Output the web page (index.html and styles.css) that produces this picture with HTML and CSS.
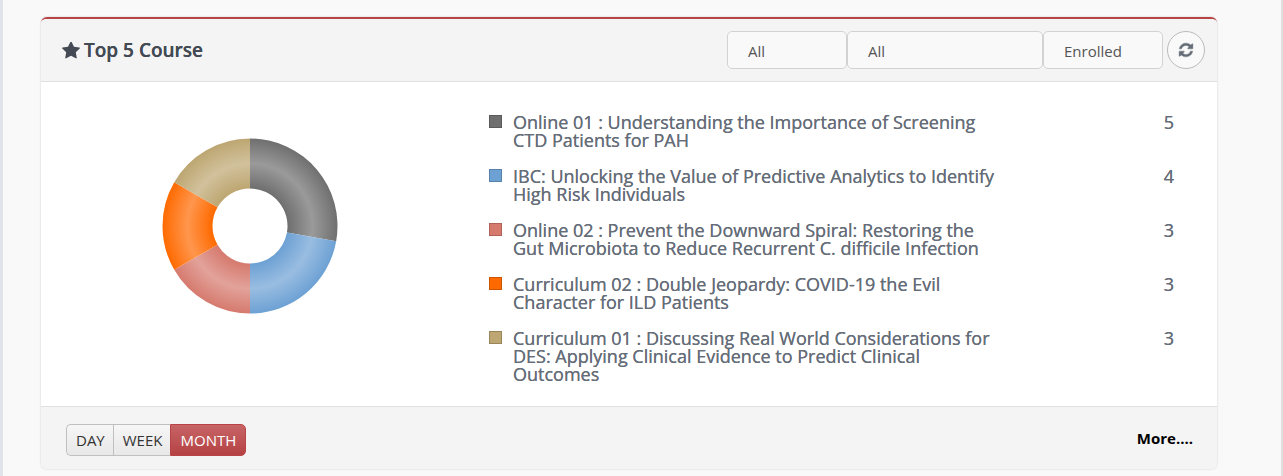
FILE: index.html
```html
<!DOCTYPE html>
<html lang="en">
<head>
<meta charset="utf-8">
<title>Top 5 Course</title>
<link rel="stylesheet" href="styles.css">
</head>
<body>
<main class="content">
  <section class="panel">
    <header class="panel-header">
      <h2 class="panel-title">
        <svg class="star" viewBox="0 128 1664 1504" aria-hidden="true"><path fill="currentColor" d="M1664 647q0 22-26 48l-363 354 86 500q1 7 1 20 0 21-10.5 35.5t-30.5 14.5q-19 0-40-12l-449-236-449 236q-22 12-40 12-21 0-31.5-14.5t-10.5-35.5q0-6 2-20l86-500-364-354q-25-27-25-48 0-37 56-46l502-73 225-455q19-41 49-41t49 41l225 455 502 73q56 9 56 46z"/></svg>
        <span>Top 5 Course</span>
      </h2>
      <div class="filters">
        <select class="filter" aria-label="Category"><option>All</option></select>
        <select class="filter filter-wide" aria-label="Course type"><option>All</option></select>
        <select class="filter" aria-label="Status"><option>Enrolled</option></select>
        <button class="refresh" type="button" aria-label="Refresh">
          <svg class="refresh-icon" viewBox="0 0 1792 1792" aria-hidden="true"><path fill="currentColor" stroke="currentColor" stroke-width="50" d="M1639 1056q0 5-1 7-64 268-268 434.5t-478 166.5q-146 0-282.5-55t-243.5-157l-129 129q-19 19-45 19t-45-19-19-45v-448q0-26 19-45t45-19h448q26 0 45 19t19 45-19 45l-137 137q71 66 161 102t187 36q134 0 250-65t186-179q11-17 53-117 8-23 30-23h192q13 0 22.500 9.500t9.500 22.500zm25-800v448q0 26-19 45t-45 19h-448q-26 0-45-19t-19-45 19-45l138-138q-148-137-349-137-134 0-250 65t-186 179q-11 17-53 117-8 23-30 23h-199q-13 0-22.500-9.500t-9.500-22.500v-7q65-268 270-434.500t480-166.500q146 0 284 55.500t245 156.500l130-129q19-19 45-19t45 19 19 45z"/></svg>
        </button>
      </div>
    </header>
    <div class="panel-body">
      <div class="chart">
        <svg class="donut" viewBox="-88 -88 176 176" role="img" aria-label="Share of the top five courses">
          <defs>
            <radialGradient id="g1" gradientUnits="userSpaceOnUse" cx="0" cy="0" r="87.500"><stop offset=".43" stop-color="#6f6f6f"/><stop offset=".715" stop-color="#9a9a9a"/><stop offset="1" stop-color="#6f6f6f"/></radialGradient>
            <radialGradient id="g2" gradientUnits="userSpaceOnUse" cx="0" cy="0" r="87.500"><stop offset=".43" stop-color="#6da1d4"/><stop offset=".715" stop-color="#99bde1"/><stop offset="1" stop-color="#6da1d4"/></radialGradient>
            <radialGradient id="g3" gradientUnits="userSpaceOnUse" cx="0" cy="0" r="87.500"><stop offset=".43" stop-color="#d67a6e"/><stop offset=".715" stop-color="#e2a29a"/><stop offset="1" stop-color="#d67a6e"/></radialGradient>
            <radialGradient id="g4" gradientUnits="userSpaceOnUse" cx="0" cy="0" r="87.500"><stop offset=".43" stop-color="#ff6a00"/><stop offset=".715" stop-color="#ff964d"/><stop offset="1" stop-color="#ff6a00"/></radialGradient>
            <radialGradient id="g5" gradientUnits="userSpaceOnUse" cx="0" cy="0" r="87.500"><stop offset=".43" stop-color="#bda671"/><stop offset=".715" stop-color="#d1c19c"/><stop offset="1" stop-color="#bda671"/></radialGradient>
          </defs>
          <path fill="url(#g1)" d="M0-87.500A87.500 87.500 0 0 1 86.170 15.190L36.930 6.510A37.500 37.500 0 0 0 0-37.500Z"/>
          <path fill="url(#g2)" d="M86.170 15.190A87.500 87.500 0 0 1 0 87.500L0 37.500A37.500 37.500 0 0 0 36.930 6.510Z"/>
          <path fill="url(#g3)" d="M0 87.500A87.500 87.500 0 0 1-75.780 43.750L-32.480 18.750A37.500 37.500 0 0 0 0 37.500Z"/>
          <path fill="url(#g4)" d="M-75.780 43.750A87.500 87.500 0 0 1-75.780-43.750L-32.480-18.750A37.500 37.500 0 0 0-32.480 18.750Z"/>
          <path fill="url(#g5)" d="M-75.780-43.750A87.500 87.500 0 0 1 0-87.500L0-37.500A37.500 37.500 0 0 0-32.480-18.750Z"/>
        </svg>
      </div>
      <table class="courses">
        <tbody>
          <tr><td class="key"><span class="swatch gray"></span></td><th scope="row" class="name">Online 01 : Understanding the Importance of Screening CTD Patients for PAH</th><td class="count">5</td></tr>
          <tr><td class="key"><span class="swatch blue"></span></td><th scope="row" class="name">IBC: Unlocking the Value of Predictive Analytics to Identify High Risk Individuals</th><td class="count">4</td></tr>
          <tr><td class="key"><span class="swatch red"></span></td><th scope="row" class="name">Online 02 : Prevent the Downward Spiral: Restoring the Gut Microbiota to Reduce Recurrent C. difficile Infection</th><td class="count">3</td></tr>
          <tr><td class="key"><span class="swatch orange"></span></td><th scope="row" class="name">Curriculum 02 : Double Jeopardy: COVID-19 the Evil Character for ILD Patients</th><td class="count">3</td></tr>
          <tr><td class="key"><span class="swatch tan"></span></td><th scope="row" class="name">Curriculum 01 : Discussing Real World Considerations for DES: Applying Clinical Evidence to Predict Clinical Outcomes</th><td class="count">3</td></tr>
        </tbody>
      </table>
    </div>
    <footer class="panel-footer">
      <div class="periods">
        <button class="period" type="button">DAY</button>
        <button class="period" type="button">WEEK</button>
        <button class="period active" type="button" aria-pressed="true">MONTH</button>
      </div>
      <a class="more" href="#">More....</a>
    </footer>
  </section>
</main>
</body>
</html>
```

FILE: styles.css
```css
* { box-sizing: border-box; }

body {
  margin: 0;
  background: #f9f9f9;
  font-family: "Open Sans", sans-serif;
  font-size: 15px;
  color: #656d78;
}

.content {
  min-height: 100vh;
  padding: 17px 64px 6px 38px;
  border-left: 3px solid #e0e4e9;
  border-right: 2px solid #dfdfdf;
}

.panel {
  border-top: 2px solid #b94446;
  border-radius: 6px;
  background: #fff;
  box-shadow: 0 0 2px rgba(0, 0, 0, 0.22);
  overflow: hidden;
}

.panel-header {
  display: flex;
  align-items: center;
  justify-content: space-between;
  height: 63px;
  padding: 0 12px 0 21px;
  background: #f4f4f4;
  border-bottom: 1px solid #e0e0e0;
}

.panel-title {
  display: flex;
  align-items: center;
  gap: 4px;
  margin: 0;
  font-size: 19px;
  font-weight: 600;
  color: #434a54;
  text-shadow: 0 0 0 currentColor;
}

.star { width: 18px; height: 17px; }

.filters { display: flex; }

.filter {
  appearance: none;
  width: 120px;
  height: 38px;
  padding: 2px 20px 0;
  border: 1px solid #d2d2d2;
  border-radius: 5px;
  background: #f9f9f9;
  font: inherit;
  color: #555;
}

.filter-wide { width: 196px; }

.refresh {
  display: flex;
  align-items: center;
  justify-content: center;
  width: 38px;
  height: 38px;
  margin-left: 4px;
  padding: 0;
  border: 1px solid #bbb;
  border-radius: 50%;
  background: #f9f9f9;
  color: #656d78;
}

.refresh-icon { width: 16px; height: 16px; }

.panel-body {
  display: flex;
  padding: 31px 43px 23px 0;
}

.chart {
  flex: 0 0 448px;
  padding: 25px 0 0 121px;
}

.donut { display: block; width: 176px; height: 176px; }

.courses {
  flex: 1;
  table-layout: fixed;
  width: 100%;
  border-collapse: collapse;
  font-size: 18px;
  line-height: 18px;
  font-weight: 500;
  text-shadow: 0 0 0 currentColor;
}

.courses td,
.courses th {
  padding: 0 0 18px;
  vertical-align: top;
}

.courses tr:last-child > * { padding-bottom: 0; }

.courses .key { width: 24px; }

.courses .name {
  width: 490px;
  font-weight: 500;
  text-align: left;
}

.courses .count { text-align: right; }

.swatch {
  display: block;
  width: 13px;
  height: 13px;
  margin-top: 2px;
  border: 1px solid;
}

.gray { background: #6f6f6f; border-color: #5a5a5a; }
.blue { background: #6da1d4; border-color: #5682ab; }
.red { background: #d67a6e; border-color: #b06258; }
.orange { background: #ff6a00; border-color: #cc5500; }
.tan { background: #bda671; border-color: #98865a; }

.panel-footer {
  display: flex;
  align-items: center;
  justify-content: space-between;
  height: 63px;
  padding: 3px 24px 0 25px;
  background: #f4f4f4;
  border-top: 1px solid #e0e0e0;
}

.periods { display: flex; }

.period {
  height: 32px;
  margin: 0;
  padding: 0 8px 0 9px;
  border: 1px solid #c0c0c0;
  border-right-width: 0;
  background: linear-gradient(#f6f6f6, #e8e8e8);
  font: inherit;
  color: #333;
}

.period:first-child { border-radius: 5px 0 0 5px; }

.period.active {
  padding: 0 9px;
  border: 1px solid #b94446;
  border-radius: 0 5px 5px 0;
  background: linear-gradient(#c76466, #b54244);
  color: #fff;
}

.more {
  padding-bottom: 4px;
  font-weight: 700;
  color: #000;
  text-decoration: none;
}
```
